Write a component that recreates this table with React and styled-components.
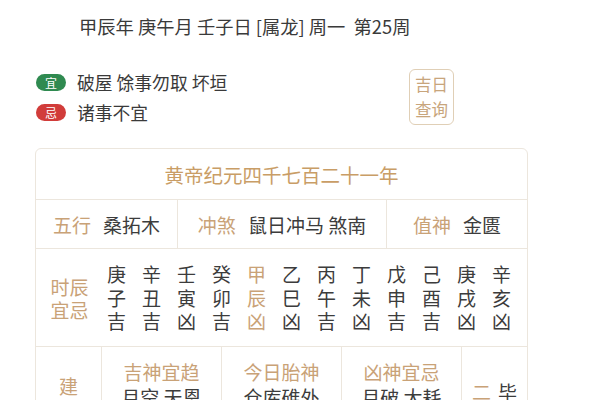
import styled, { createGlobalStyle } from "styled-components";

const GlobalStyle = createGlobalStyle`
  body {
    margin: 0;
    background: #ffffff;
    font-family: "Noto Sans CJK SC", "Noto Sans", "Liberation Sans", sans-serif;
    color: #3c3c3c;
  }
`;

const Page = styled.div`
  width: 600px;
  height: 400px;
  overflow: hidden;
  background: #ffffff;
`;

const DateLine = styled.div`
  padding: 14px 0 0 79px;
  font-size: 18.3px;
  line-height: 24px;
  color: #3a3a3a;
  white-space: pre;
`;

const YiJiSection = styled.div`
  display: flex;
  justify-content: space-between;
  align-items: center;
  width: 418px;
  margin: 29px 0 0 36px;
`;

const YiJiList = styled.div`
  display: flex;
  flex-direction: column;
`;

const YiJiRow = styled.div`
  display: flex;
  align-items: center;
  gap: 11px;
  height: 30px;
  font-size: 17.8px;
  color: #3a3a3a;
`;

const Badge = styled.span`
  display: inline-flex;
  align-items: center;
  justify-content: center;
  width: 30px;
  height: 17px;
  border-radius: 9px;
  background: ${(p) => (p.$bad ? "#d13c3a" : "#2f8a50")};
  color: #ffffff;
  font-size: 12px;
  line-height: 17px;
`;

const QueryButton = styled.div`
  box-sizing: border-box;
  width: 45px;
  height: 56px;
  border: 1px solid #e0cfb6;
  border-radius: 6px;
  display: flex;
  flex-direction: column;
  align-items: center;
  justify-content: center;
  font-size: 16.5px;
  line-height: 25px;
  color: #c8a57c;
`;

const Table = styled.div`
  box-sizing: border-box;
  width: 493px;
  margin: 21px 0 0 35px;
  border: 1px solid #ece6dd;
  border-radius: 6px;
  font-size: 19px;
`;

const TitleRow = styled.div`
  height: 50px;
  display: flex;
  align-items: center;
  justify-content: center;
  border-bottom: 1px solid #ece6dd;
  color: #c99d66;
  font-size: 19.5px;
`;

const InfoRow = styled.div`
  display: grid;
  grid-template-columns: 141px 209px 1fr;
  height: 48px;
  border-bottom: 1px solid #ece6dd;
`;

const InfoCell = styled.div`
  display: flex;
  align-items: center;
  justify-content: center;
  gap: 12px;
  border-left: ${(p) => (p.$first ? "none" : "1px solid #ece6dd")};
`;

const Label = styled.span`
  color: #c9a277;
`;

const Value = styled.span`
  color: #3c3c3c;
`;

const HourRow = styled.div`
  display: grid;
  grid-template-columns: 63px repeat(12, 35px) 1fr;
  align-items: center;
  height: 97px;
  border-bottom: 1px solid #ece6dd;
`;

const HourLabel = styled.div`
  display: flex;
  flex-direction: column;
  align-items: center;
  padding-left: 4px;
  line-height: 23px;
  color: #c9a277;
`;

const HourCol = styled.div`
  display: flex;
  flex-direction: column;
  align-items: center;
  line-height: 23.5px;
  color: ${(p) => (p.$now ? "#c9a277" : "#3c3c3c")};
`;

const GodsRow = styled.div`
  display: grid;
  grid-template-columns: 65px 120px 120px 120px 1fr;
  height: 76px;
`;

const GodsCell = styled.div`
  display: flex;
  flex-direction: column;
  align-items: center;
  justify-content: ${(p) => (p.$center ? "center" : "flex-start")};
  padding-top: ${(p) => (p.$center ? "0" : "12px")};
  line-height: 25px;
  border-left: ${(p) => (p.$first ? "none" : "1px solid #ece6dd")};
`;

const StarCell = styled(GodsCell)`
  flex-direction: row;
  justify-content: center;
  align-items: center;
  gap: 7px;
`;

const hours = [
  ["庚", "子", "吉"],
  ["辛", "丑", "吉"],
  ["壬", "寅", "凶"],
  ["癸", "卯", "吉"],
  ["甲", "辰", "凶"],
  ["乙", "巳", "凶"],
  ["丙", "午", "吉"],
  ["丁", "未", "凶"],
  ["戊", "申", "吉"],
  ["己", "酉", "吉"],
  ["庚", "戌", "凶"],
  ["辛", "亥", "凶"],
];

const gods = [
  { title: "吉神宜趋", text: "月空 天恩" },
  { title: "今日胎神", text: "仓库碓外" },
  { title: "凶神宜忌", text: "月破 大耗" },
];

export default function App() {
  return (
    <Page>
      <GlobalStyle />
      <DateLine>甲辰年 庚午月 壬子日 [属龙] 周一  第25周</DateLine>

      <YiJiSection>
        <YiJiList>
          <YiJiRow>
            <Badge>宜</Badge>
            破屋 馀事勿取 坏垣
          </YiJiRow>
          <YiJiRow>
            <Badge $bad>忌</Badge>
            诸事不宜
          </YiJiRow>
        </YiJiList>
        <QueryButton>
          <span>吉日</span>
          <span>查询</span>
        </QueryButton>
      </YiJiSection>

      <Table>
        <TitleRow>黄帝纪元四千七百二十一年</TitleRow>
        <InfoRow>
          <InfoCell $first>
            <Label>五行</Label>
            <Value>桑拓木</Value>
          </InfoCell>
          <InfoCell>
            <Label>冲煞</Label>
            <Value>鼠日冲马 煞南</Value>
          </InfoCell>
          <InfoCell>
            <Label>值神</Label>
            <Value>金匮</Value>
          </InfoCell>
        </InfoRow>
        <HourRow>
          <HourLabel>
            <span>时辰</span>
            <span>宜忌</span>
          </HourLabel>
          {hours.map((h, i) => (
            <HourCol key={i} $now={i === 4}>
              {h.map((c, j) => (
                <span key={j}>{c}</span>
              ))}
            </HourCol>
          ))}
        </HourRow>
        <GodsRow>
          <GodsCell $first $center>
            <Label>建</Label>
          </GodsCell>
          {gods.map((g) => (
            <GodsCell key={g.title}>
              <Label>{g.title}</Label>
              <Value>{g.text}</Value>
            </GodsCell>
          ))}
          <StarCell>
            <Label>二</Label>
            <Value>毕</Value>
          </StarCell>
        </GodsRow>
      </Table>
    </Page>
  );
}
